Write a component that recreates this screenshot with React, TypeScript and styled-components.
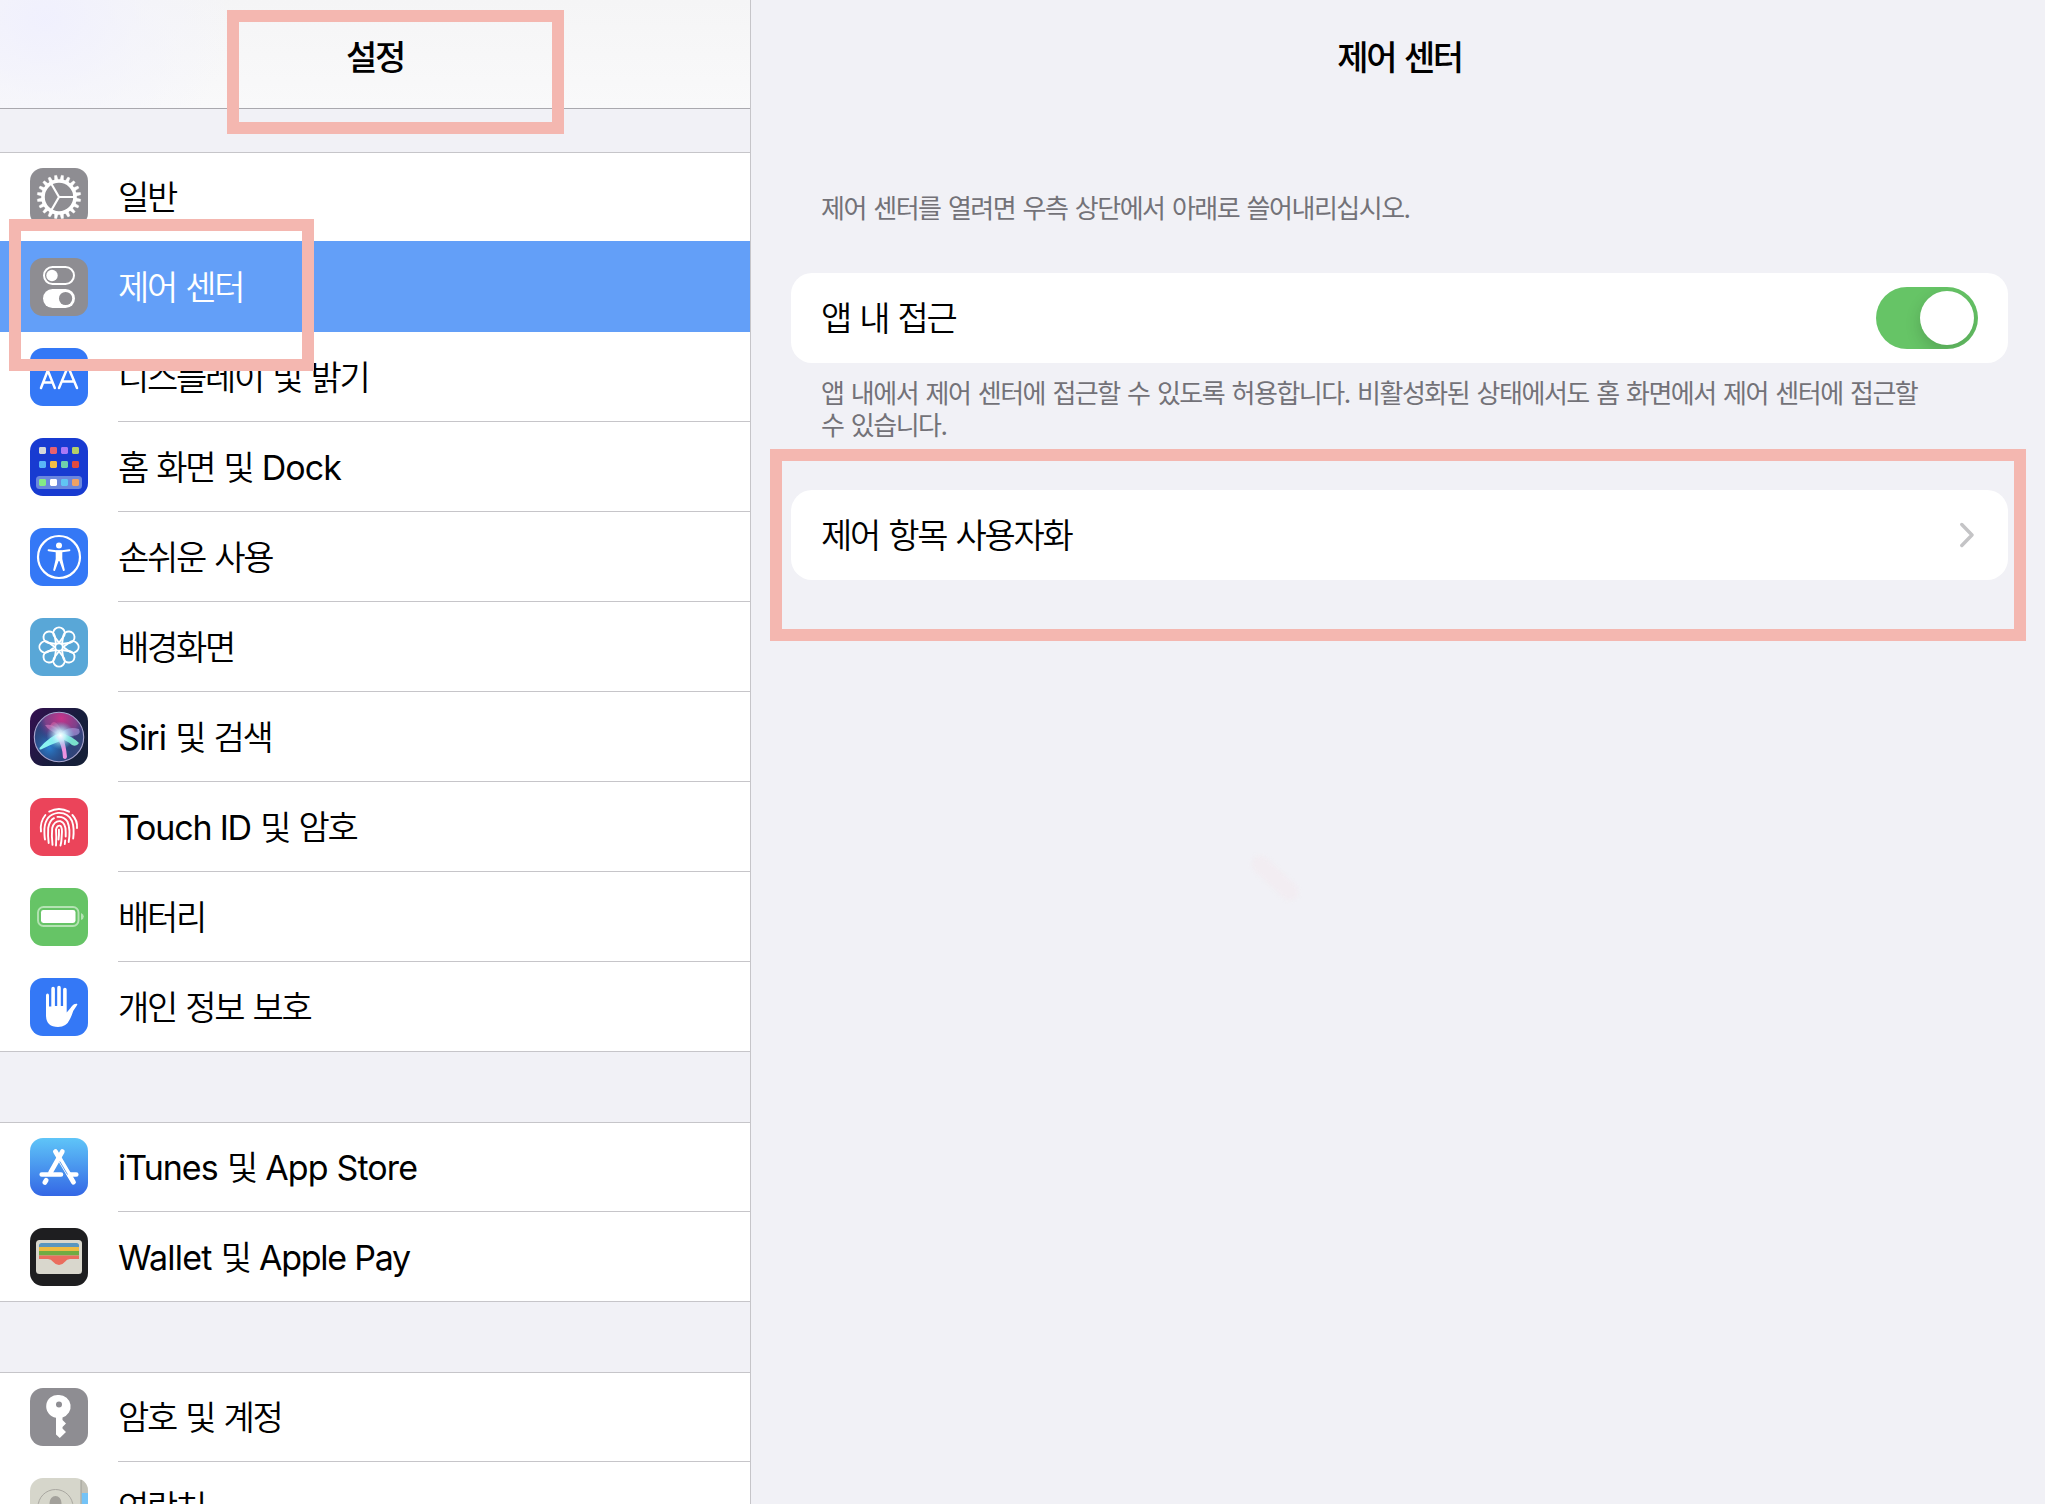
import React from "react";
import styled, { createGlobalStyle, css } from "styled-components";

const GlobalStyle = createGlobalStyle`
  * { box-sizing: border-box; }
  body {
    margin: 0;
    background: #f1f1f6;
    color: #000;
    font-family: Inter, "Noto Sans CJK KR", sans-serif;
    overflow: hidden;
  }
`;

const LINE = "#c6c5c9";

const Screen = styled.div`
  position: relative;
  display: flex;
  width: 2045px;
  height: 1504px;
  overflow: hidden;
`;

const Sidebar = styled.aside`
  display: flex;
  flex-direction: column;
  flex: none;
  width: 751px;
  border-right: 1px solid ${LINE};
`;

const SidebarHeader = styled.header`
  flex: none;
  display: flex;
  justify-content: center;
  height: 109px;
  padding-top: 34px;
  border-bottom: 1px solid #a9a8ae;
  background:
    radial-gradient(ellipse 190px 150px at 45px 20px, rgba(240, 240, 254, 0.95), rgba(243, 243, 252, 0.6) 50%, rgba(246, 246, 250, 0)),
    linear-gradient(#f5f5f6, #f9f9fa);
`;

const Title = styled.h1`
  margin: 0;
  font-size: 34px;
  font-weight: 500;
  line-height: 48px;
  letter-spacing: -2.3px;
  word-spacing: 2px;
  white-space: pre;
`;

const Groups = styled.div`
  flex: none;
  display: flex;
  flex-direction: column;
  gap: 70px;
  padding-top: 43px;
`;

const Group = styled.ul`
  display: flex;
  flex-direction: column;
  margin: 0;
  padding: 0;
  list-style: none;
  background: #fff;
  border-top: 1px solid ${LINE};
`;

const Row = styled.li<{ $selected?: boolean }>`
  display: flex;
  align-items: flex-end;
  gap: 30px;
  height: 90px;
  padding-left: 30px;
  &:first-child { height: 89px; }
  &:last-child { border-bottom: 1px solid ${LINE}; }
  ${(p) =>
    p.$selected &&
    css`
      height: 91px;
      margin-top: -1px;
      background: #639ff8;
      color: #fff;
    `}
`;

const IconTile = styled.span<{ $bg: string; $last?: boolean }>`
  flex: none;
  width: 58px;
  height: 58px;
  margin-bottom: ${(p) => (p.$last ? 15 : 16)}px;
  border-radius: 13px;
  overflow: hidden;
  background: ${(p) => p.$bg};
  svg { display: block; }
`;

const RowBody = styled.span<{ $line: boolean; $last: boolean }>`
  flex: 1;
  display: flex;
  align-items: center;
  height: 88px;
  padding-top: 2px;
  margin-bottom: ${(p) => (p.$last || p.$line ? 0 : 1)}px;
  ${(p) => p.$line && css`height: 89px; border-bottom: 1px solid ${LINE};`}
`;

const Label = styled.span`
  font-size: 34px;
  font-weight: 350;
  line-height: 48px;
  letter-spacing: -2.3px;
  word-spacing: 2px;
  white-space: pre;
`;

const Latin = styled.span<{ $spacing: number }>`
  font-weight: 400;
  letter-spacing: ${(p) => p.$spacing}px;
  word-spacing: 0;
`;

const Detail = styled.main`
  flex: 1;
  display: flex;
  flex-direction: column;
  padding: 34px 37px 0 40px;
`;

const DetailTitle = styled(Title)`
  text-align: center;
`;

const Note = styled.p<{ $top: number; $height: number }>`
  margin: ${(p) => p.$top}px 0 0;
  height: ${(p) => p.$height}px;
  padding: 0 30px;
  color: #737278;
  font-size: 26px;
  line-height: 32px;
  letter-spacing: -1.5px;
  word-spacing: 1.6px;
  white-space: pre;
`;

const Card = styled.div`
  flex: none;
  display: flex;
  align-items: center;
  justify-content: space-between;
  height: 90px;
  padding: 0 30px;
  border-radius: 21px;
  background: #fff;
`;

const CardLabel = styled(Label)`
  padding-top: 2px;
`;

const Toggle = styled.span`
  display: flex;
  justify-content: flex-end;
  width: 102px;
  height: 62px;
  padding: 4px;
  border-radius: 31px;
  background: #66c466;
  overflow: hidden;
`;

const Knob = styled.span`
  width: 54px;
  height: 54px;
  border-radius: 50%;
  background: #fff;
  box-shadow: 0 6px 16px rgba(0, 0, 0, 0.16);
`;

const Chevron = styled.svg`
  margin-right: 4px;
`;

const Highlight = styled.div<{ $x: number; $y: number; $w: number; $h: number }>`
  position: absolute;
  left: ${(p) => p.$x}px;
  top: ${(p) => p.$y}px;
  width: ${(p) => p.$w}px;
  height: ${(p) => p.$h}px;
  border: 12px solid #f4b7b0;
  pointer-events: none;
`;

const Smudge = styled.div`
  position: absolute;
  left: 1246px;
  top: 869px;
  width: 58px;
  height: 18px;
  border-radius: 9px;
  background: #f2edf2;
  filter: blur(2px);
  transform: rotate(43deg);
`;

const Glyph = ({ children }: { children: React.ReactNode }) => (
  <svg width="58" height="58" viewBox="0 0 58 58" fill="none">
    {children}
  </svg>
);

const range = (n: number) => Array.from({ length: n }, (_, i) => i);

const GearIcon = () => (
  <Glyph>
    <g stroke="#fff">
      <circle cx="29" cy="29" r="16" strokeWidth="3.6" />
      {range(20).map((i) => (
        <path key={i} d="M27.2 12.5L27.9 7.2H30.1L30.8 12.5Z" fill="#fff" strokeWidth="0.4" transform={`rotate(${i * 18 + 9} 29 29)`} />
      ))}
      <path d="M29 29H45M29 29L21 15.2M29 29L21 42.8" strokeWidth="2.2" />
    </g>
  </Glyph>
);

const ControlIcon = () => (
  <Glyph>
    <rect x="14" y="9" width="30" height="17" rx="8.5" stroke="#fff" strokeWidth="2" />
    <circle cx="22" cy="17.5" r="5.7" fill="#fff" />
    <rect x="13" y="31" width="32" height="19" rx="9.5" fill="#fff" />
    <circle cx="35.6" cy="40.5" r="6.6" fill="#8e8d92" />
  </Glyph>
);

const DisplayIcon = () => (
  <Glyph>
    <g stroke="#fff" strokeWidth="2.5" strokeLinecap="round" strokeLinejoin="round">
      <path d="M11 40L17.8 22.5L24.8 40M13.2 34.5H22.4" />
      <path d="M29 40L38 18.5L47 40M32 33.5H44" />
    </g>
  </Glyph>
);

const HOME_DOTS = [
  ["#d3d8da", "#e8616f", "#a978f5", "#b3cf67"],
  ["#5ab5f7", "#f2bd45", "#6fd0ac", "#e04b3f"],
  ["#84ea86", "#ffffff", "#61c4f3", "#f0a264"],
];

const HomeIcon = () => (
  <Glyph>
    <rect x="6" y="38" width="46" height="13" rx="3.5" fill="#6a87de" />
    {HOME_DOTS.map((row, r) =>
      row.map((c, i) => (
        <rect key={`${r}-${i}`} x={9 + i * 11} y={[9, 23, 41][r]} width="7" height="7" rx="1.4" fill={c} />
      ))
    )}
  </Glyph>
);

const AccessIcon = () => (
  <Glyph>
    <circle cx="29" cy="29" r="21" stroke="#fff" strokeWidth="2.2" />
    <circle cx="29" cy="17.6" r="3" fill="#fff" />
    <path d="M18.6 22.2L26 23.3H32L39.4 22.2" stroke="#fff" strokeWidth="2" strokeLinecap="round" strokeLinejoin="round" />
    <path d="M25.7 22.6H32.3V31L34.8 42Q34.4 43.6 33 42.8L29.4 33H28.6L25 42.8Q23.6 43.6 23.2 42L25.7 31Z" fill="#fff" />
  </Glyph>
);

const WallpaperIcon = () => (
  <Glyph>
    <g stroke="#fff" strokeWidth="1.9">
      {range(8).map((i) => (
        <path key={i} d="M29 24.8L24.2 18.2A5.7 5.7 0 1 1 33.8 18.2Z" strokeLinejoin="round" transform={`rotate(${i * 45} 29 29)`} />
      ))}
      <circle cx="29" cy="29" r="3.8" />
    </g>
  </Glyph>
);

const SiriIcon = () => (
  <Glyph>
    <defs>
      <radialGradient id="siriTop" cx="0.55" cy="0.12" r="0.55">
        <stop offset="0" stopColor="#c8338a" />
        <stop offset="0.6" stopColor="#94408f" stopOpacity="0.75" />
        <stop offset="1" stopColor="#30308a" stopOpacity="0" />
      </radialGradient>
      <radialGradient id="siriBottom" cx="0.3" cy="0.72" r="0.6">
        <stop offset="0" stopColor="#2a80cf" />
        <stop offset="1" stopColor="#1a2c63" stopOpacity="0" />
      </radialGradient>
      <radialGradient id="siriCore">
        <stop offset="0" stopColor="#fff" />
        <stop offset="0.35" stopColor="#c9f4ff" stopOpacity="0.85" />
        <stop offset="1" stopColor="#57cfe8" stopOpacity="0" />
      </radialGradient>
    </defs>
    <circle cx="29" cy="29" r="24.5" fill="#34457a" />
    <circle cx="29" cy="29" r="24.5" fill="url(#siriBottom)" />
    <circle cx="29" cy="29" r="24.5" fill="url(#siriTop)" />
    <path d="M29 27Q18 22 15 17Q27 15 31 27Z" fill="#e58ad0" opacity="0.5" />
    <path d="M29 28Q36 17 49 21Q52 27 42 28Z" fill="#b3a0e4" opacity="0.6" />
    <path d="M20 18Q25 7 33 26Z" fill="#f077b4" opacity="0.4" />
    <path d="M30 25Q20 28 9.500 40Q9 42.500 12 41Q21 36.500 33 32Z" fill="#8af5f1" />
    <path d="M29 24Q42 28 49 35Q46.500 39 42 37Q37 32 29 30.500Z" fill="#7ee9d0" opacity="0.95" />
    <path d="M26 28Q32.500 37 33 50Q36 52.500 37 49Q36 37 32.500 28Z" fill="#ec93e0" />
    <circle cx="30.500" cy="27.500" r="14" fill="url(#siriCore)" />
    <circle cx="29" cy="29" r="24.7" stroke="#a9a6d0" strokeWidth="1.1" />
  </Glyph>
);

const TouchIcon = () => (
  <Glyph>
    <g stroke="#fff" strokeWidth="1.9" strokeLinecap="round">
      <path d="M19.2 13.600Q29 8.200 39 13.700" />
      <path d="M11 33.500Q9.700 24 15.400 17" />
      <path d="M42.400 17Q47.600 22.500 47 30" />
      <path d="M15 41.500Q14.300 38 14.400 31Q15.400 16.500 28 14.900Q38 14.300 42 23Q44.500 30 43.200 40.500" />
      <path d="M18.700 45Q17.700 38 18.200 30Q19.600 22.500 24 20.200" />
      <path d="M27.500 18.900Q34 18.300 37.400 23.500Q40.800 31 38.700 44" />
      <path d="M22.500 46.800Q21.400 38 22.200 30Q24.400 22.400 30.400 23.200Q35.800 25 35.700 34V38.500" />
      <path d="M35.200 42.500L34.800 46" />
      <path d="M26 47.500Q26.600 38 26 31.500Q27.200 26.800 30.400 27.800Q32.700 30 31.700 38Q31.600 44 30.500 47.500" />
      <path d="M28.900 31.600Q29.200 38 28.500 41.500" />
    </g>
  </Glyph>
);

const BatteryIcon = () => (
  <Glyph>
    <rect x="8" y="19" width="40.500" height="19" rx="5.500" stroke="#b4e3b3" strokeWidth="1.900" />
    <rect x="11" y="22" width="34.500" height="13" rx="2.400" fill="#fff" />
    <path d="M51 25Q53.800 26 53.800 28.500Q53.800 31 51 32Z" fill="#b4e3b3" />
  </Glyph>
);

const HandIcon = () => (
  <Glyph>
    <path
      d="M16 17.500Q16 15.500 17.500 15.500Q19 15.500 19 17.500V28.500H21.300V10.800Q21.300 8.800 23.100 8.800Q24.900 8.800 24.900 10.800V28H27.200V9.800Q27.200 7.800 29 7.800Q30.800 7.800 30.800 9.800V28H33.100V11.600Q33.100 9.700 34.900 9.700Q36.700 9.700 36.700 11.600V34.500Q39.500 31.500 42 28Q44 25.500 46.800 25.800Q47.800 26.200 47 27.200L43.200 33Q42 37 40 41Q36.500 49 28 49Q16 49 16 37Z"
      fill="#fff"
    />
  </Glyph>
);

const StoreIcon = () => (
  <Glyph>
    <g stroke="#fff" strokeLinecap="round">
      <path d="M32.400 13.500L20.500 34.500" strokeWidth="4.600" />
      <path d="M25.400 13.500L43.500 44.200" strokeWidth="4.800" />
      <path d="M16.200 42.200L14.800 44.500" strokeWidth="4.800" />
      <path d="M11.700 36.500H31M39 36.500H46.300" strokeWidth="4.600" />
    </g>
    <path d="M29.800 23.500L37.500 36.500" stroke="#4c93ee" strokeWidth="0.9" />
  </Glyph>
);

const WalletIcon = () => (
  <Glyph>
    <rect x="6" y="12" width="46" height="34" rx="3.500" fill="#d9d7cd" />
    <path d="M9 19V17.500Q9 15 11.500 15H46.500Q49 15 49 17.500V19Z" fill="#5a96bf" />
    <rect x="9" y="19" width="40" height="4" fill="#eebb42" />
    <rect x="9" y="23" width="40" height="4.500" fill="#70ac43" />
    <path d="M9 27.500H49V31H40Q36.800 31.200 35 33.800Q32.500 37 29 37Q25.500 37 23 33.800Q21.200 31.200 18 31H9Z" fill="#ea6d5e" />
  </Glyph>
);

const KeyIcon = () => (
  <Glyph>
    <path
      fillRule="evenodd"
      d="M29 7A11.500 11.500 0 0 1 32.500 29.500V32L36 35.500L32.500 39V40.500L36 44L29.800 50L26 46.500V29.800A11.500 11.500 0 0 1 29 7ZM29 13.500A3 3 0 1 0 29 19.500A3 3 0 1 0 29 13.500Z"
      fill="#fff"
    />
  </Glyph>
);

const ContactsIcon = () => (
  <Glyph>
    <rect x="51" width="7" height="15" fill="#c3c2b8" />
    <rect x="51.500" y="15" width="6.500" height="22" fill="#74c3f7" />
    <path d="M51 2V58" stroke="#9f9e96" />
    <circle cx="25.500" cy="29" r="17.500" stroke="#a9a7a0" strokeWidth="1" />
    <ellipse cx="25.500" cy="25" rx="6" ry="7" fill="#a3a19b" />
    <path d="M13 41Q16 34 25.500 34Q35 34 38 41Z" fill="#a3a19b" />
  </Glyph>
);

type Part = string | [string, number];
interface Item {
  label: Part[];
  bg: string;
  Icon: React.FC;
  selected?: boolean;
}

const BLUE = "#3478f6";
const GRAY = "#8e8d92";

const GROUPS: Item[][] = [
  [
    { label: ["일반"], bg: GRAY, Icon: GearIcon },
    { label: ["제어 센터"], bg: GRAY, Icon: ControlIcon, selected: true },
    { label: ["디스플레이 및 밝기"], bg: BLUE, Icon: DisplayIcon },
    { label: ["홈 화면 및 ", ["Dock", -0.9]], bg: "#183bd1", Icon: HomeIcon },
    { label: ["손쉬운 사용"], bg: BLUE, Icon: AccessIcon },
    { label: ["배경화면"], bg: "#59a7d7", Icon: WallpaperIcon },
    { label: [["Siri", -0.9], " 및 검색"], bg: "linear-gradient(120deg, #351050, #161d3c 60%, #152036)", Icon: SiriIcon },
    { label: [["Touch ID", -1.2], " 및 암호"], bg: "#eb445a", Icon: TouchIcon },
    { label: ["배터리"], bg: "#66c466", Icon: BatteryIcon },
    { label: ["개인 정보 보호"], bg: BLUE, Icon: HandIcon },
  ],
  [
    { label: [["iTunes", -1], " 및 ", ["App Store", -0.85]], bg: "linear-gradient(#5fc5f8, #3467e5)", Icon: StoreIcon },
    { label: [["Wallet", -0.8], " 및 ", ["Apple Pay", -1.25]], bg: "#1e1e20", Icon: WalletIcon },
  ],
  [
    { label: ["암호 및 계정"], bg: GRAY, Icon: KeyIcon },
    { label: ["연락처"], bg: "#d6d6cb", Icon: ContactsIcon },
  ],
];

export default function App() {
  return (
    <>
      <GlobalStyle />
      <Screen>
        <Sidebar>
          <SidebarHeader>
            <Title>설정</Title>
          </SidebarHeader>
          <Groups>
            {GROUPS.map((items, g) => (
              <Group key={g}>
                {items.map(({ label, bg, Icon, selected }, i) => {
                  const last = i === items.length - 1;
                  const line = !last && !selected && !items[i + 1]?.selected;
                  return (
                    <Row key={i} $selected={selected}>
                      <IconTile $bg={bg} $last={last}>
                        <Icon />
                      </IconTile>
                      <RowBody $line={line} $last={last}>
                        <Label>
                          {label.map((part, n) =>
                            typeof part === "string" ? (
                              part
                            ) : (
                              <Latin key={n} $spacing={part[1]}>
                                {part[0]}
                              </Latin>
                            )
                          )}
                        </Label>
                      </RowBody>
                    </Row>
                  );
                })}
              </Group>
            ))}
          </Groups>
        </Sidebar>
        <Detail>
          <DetailTitle>제어 센터</DetailTitle>
          <Note $top={111} $height={80}>제어 센터를 열려면 우측 상단에서 아래로 쓸어내리십시오.</Note>
          <Card>
            <CardLabel>앱 내 접근</CardLabel>
            <Toggle>
              <Knob />
            </Toggle>
          </Card>
          <Note $top={15} $height={112}>
            {"앱 내에서 제어 센터에 접근할 수 있도록 허용합니다. 비활성화된 상태에서도 홈 화면에서 제어 센터에 접근할\n수 있습니다."}
          </Note>
          <Card>
            <CardLabel>제어 항목 사용자화</CardLabel>
            <Chevron width="14" height="26" viewBox="0 0 14 26" fill="none">
              <path d="M1.800 2.500L12 13L1.800 23.500" stroke="#c4c4c6" strokeWidth="3.400" strokeLinecap="round" strokeLinejoin="round" />
            </Chevron>
          </Card>
        </Detail>
        <Smudge />
        <Highlight $x={227} $y={10} $w={337} $h={124} />
        <Highlight $x={9} $y={219} $w={305} $h={152} />
        <Highlight $x={770} $y={449} $w={1256} $h={192} />
      </Screen>
    </>
  );
}
